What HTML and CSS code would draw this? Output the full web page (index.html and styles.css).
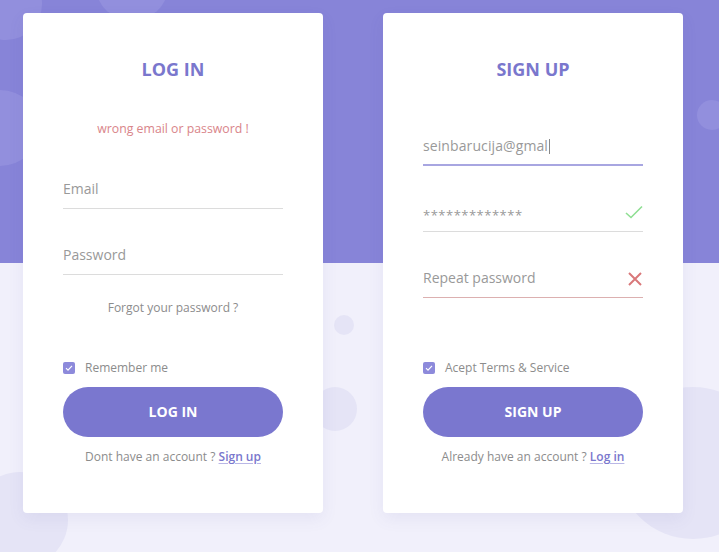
FILE: index.html
```html
<!DOCTYPE html>
<html>
<head>
<meta charset="utf-8">
<link rel="stylesheet" href="styles.css">
</head>
<body>
<div class="bg">
  <div class="bg-top"></div>
  <span class="dot d1"></span>
  <span class="dot d2"></span>
  <span class="dot d3"></span>
  <span class="dot d4"></span>
  <span class="dot light l1"></span>
  <span class="dot light l2"></span>
  <span class="dot light l3"></span>
  <span class="dot light l4"></span>
</div>
<main class="wrap">
  <section class="card">
    <h1 class="title">LOG IN</h1>
    <p class="error">wrong email or password !</p>
    <div class="field f-first">
      <span class="placeholder">Email</span>
    </div>
    <div class="field f-next">
      <span class="placeholder">Password</span>
    </div>
    <p class="forgot">Forgot your password ?</p>
    <label class="check check-login">
      <span class="box"><svg viewBox="0 0 12 12" width="12" height="12"><polyline points="3,6.2 5,8.2 9,3.8" fill="none" stroke="#fff" stroke-width="1.1"/></svg></span>
      <span>Remember me</span>
    </label>
    <button class="btn">LOG IN</button>
    <p class="foot">Dont have an account ? <a class="link">Sign up</a></p>
  </section>
  <section class="card">
    <h1 class="title">SIGN UP</h1>
    <div class="field focus su-first">
      <span class="value">seinbarucija@gmal</span><span class="caret"></span>
    </div>
    <div class="field su-next">
      <span class="value stars">*************</span>
      <svg class="icon" viewBox="0 0 18 14" width="18" height="14"><polyline points="1,8 6,12.5 17,1.5" fill="none" stroke="#8fdf93" stroke-width="1.6"/></svg>
    </div>
    <div class="field bad su-next">
      <span class="placeholder">Repeat password</span>
      <svg class="icon" viewBox="0 0 16 16" width="16" height="16"><path d="M2 2 L14 14 M14 2 L2 14" fill="none" stroke="#d9787a" stroke-width="2"/></svg>
    </div>
    <label class="check check-signup">
      <span class="box"><svg viewBox="0 0 12 12" width="12" height="12"><polyline points="3,6.2 5,8.2 9,3.8" fill="none" stroke="#fff" stroke-width="1.1"/></svg></span>
      <span>Acept Terms &amp; Service</span>
    </label>
    <button class="btn">SIGN UP</button>
    <p class="foot">Already have an account ? <a class="link">Log in</a></p>
  </section>
</main>
</body>
</html>
```
FILE: styles.css
```css
* { box-sizing: border-box; }
html, body { margin: 0; padding: 0; }
body {
  width: 719px;
  height: 552px;
  overflow: hidden;
  position: relative;
  background: #f1f0fb;
  font-family: "Open Sans", "Liberation Sans", sans-serif;
}
.bg { position: absolute; inset: 0; overflow: hidden; }
.bg-top { position: absolute; left: 0; top: 0; width: 719px; height: 263px; background: #8784d8; }
.dot { position: absolute; border-radius: 50%; background: #e5e4f6; }
.d1 { left: 334px; top: 315px; width: 20px; height: 20px; }
.d2 { left: 313px; top: 387px; width: 44px; height: 44px; }
.d3 { left: -28px; top: 472px; width: 96px; height: 96px; }
.d4 { left: 617px; top: 387px; width: 152px; height: 152px; }
.light { background: #928fdd; }
.l1 { left: -30px; top: -32px; width: 72px; height: 72px; }
.l2 { left: -40px; top: 90px; width: 80px; height: 76px; }
.l3 { left: 97px; top: -40px; width: 70px; height: 60px; }
.l4 { left: 697px; top: 100px; width: 30px; height: 30px; }

.wrap {
  position: relative;
  display: flex;
  gap: 60px;
  padding: 13px 0 0 23px;
}
.card {
  width: 300px;
  height: 500px;
  background: #fff;
  border-radius: 4px;
  box-shadow: 0 6px 16px rgba(90, 85, 170, 0.08);
  padding: 44px 40px 0;
  display: flex;
  flex-direction: column;
}
.title {
  margin: 0;
  font-size: 18px;
  line-height: 24px;
  font-weight: 700;
  color: #7a77cd;
  text-align: center;
}
.error {
  margin: 40px 0 0;
  font-size: 12.3px;
  line-height: 16px;
  color: #d9858a;
  text-align: center;
}
.field {
  position: relative;
  height: 31px;
  padding-top: 1px;
  border-bottom: 1px solid #dcdcdc;
  display: flex;
  align-items: flex-start;
  font-size: 14px;
  line-height: 20px;
  color: #999;
}
.f-first { margin-top: 41px; }
.f-next { margin-top: 35px; }
.su-first { margin-top: 54px; }
.su-next { margin-top: 35px; }
.field.focus { border-bottom: 2px solid #a8a6e1; height: 31px; }
.field.bad { border-bottom-color: #dcb0b0; }
.value { color: #999; letter-spacing: 0.1px; }
.stars { font-size: 13px; letter-spacing: 0.5px; padding-top: 3px; }
.caret { display: inline-block; width: 1px; height: 15px; margin-top: 3px; background: #888; margin-left: 1px; }
.icon { position: absolute; right: 0; top: 4px; }
.forgot {
  margin: 25px 0 0;
  font-size: 12px;
  line-height: 16px;
  color: #8c8c8c;
  text-align: center;
}
.check {
  display: flex;
  align-items: center;
  gap: 10px;
  font-size: 12px;
  line-height: 16px;
  color: #8c8c8c;
}
.check-login { margin-top: 44px; }
.check-signup { margin-top: 62px; }
.box {
  width: 12px;
  height: 12px;
  border-radius: 2px;
  background: #8d8adb;
  display: block;
}
.box svg { display: block; }
.btn {
  margin-top: 11px;
  height: 50px;
  width: 220px;
  border: 0;
  border-radius: 25px;
  background: #7a77cf;
  color: #fff;
  font-family: "Open Sans", "Liberation Sans", sans-serif;
  font-size: 14px;
  font-weight: 700;
  padding: 0 0 1px;
}
.foot {
  margin: 12px 0 0;
  font-size: 12px;
  line-height: 16px;
  color: #8c8c8c;
  text-align: center;
}
.link {
  color: #7a77cd;
  font-weight: 600;
  text-decoration: underline;
  text-decoration-color: #b9b7e6;
  text-underline-offset: 2px;
}
```
